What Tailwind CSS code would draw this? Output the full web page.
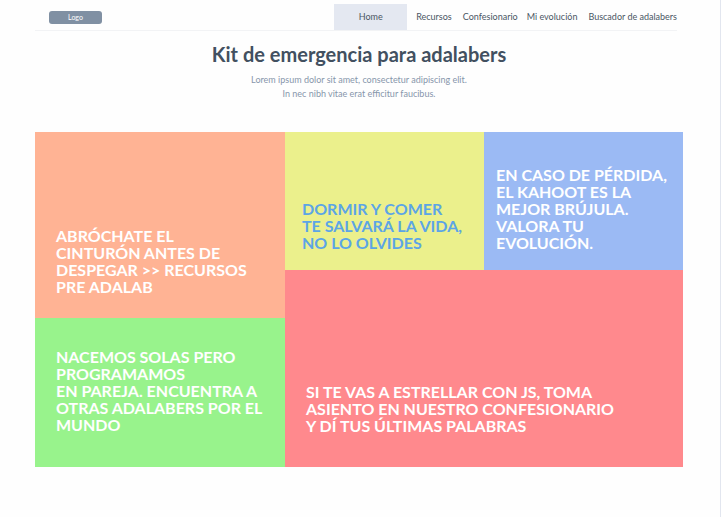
<!DOCTYPE html>
<html lang="es">
<head>
<meta charset="utf-8">
<meta name="viewport" content="width=device-width, initial-scale=1">
<title>Kit de emergencia para adalabers</title>
<script src="https://cdn.jsdelivr.net/npm/@tailwindcss/browser@4"></script>
</head>
<body class="min-h-screen border-r border-[#e2e6ef] bg-[#fefefe] pl-[35px] pr-[37px] font-['Lato','Liberation_Sans',sans-serif]">
  <header class="mr-[6px] flex items-end justify-between border-b border-[#f2f3f5] pt-1 pl-[14px]">
    <a href="#" class="mb-[6px] flex h-[13px] w-[53px] items-center justify-center rounded-[3px] bg-[#8090a3] text-[7px] leading-none text-white">Logo</a>
    <nav class="flex items-center text-[9px] leading-[26px] whitespace-nowrap text-[#4a5664]">
      <a href="#" aria-current="page" class="mr-[9px] w-[73px] bg-[#e4e8f1] text-center">Home</a>
      <a href="#" class="mr-[11px]">Recursos</a>
      <a href="#" class="mr-[9px]">Confesionario</a>
      <a href="#" class="mr-[11px]">Mi evolución</a>
      <a href="#">Buscador de adalabers</a>
    </nav>
  </header>
  <main>
    <section class="pt-[11px] pb-[31px] text-center">
      <h1 class="text-[20px] leading-6 font-bold text-[#425060]">Kit de emergencia para adalabers</h1>
      <p class="mt-[7px] text-[9px] leading-[14px] text-[#8796ab]">Lorem ipsum dolor sit amet, consectetur adipiscing elit.<br>In nec nibh vitae erat efficitur faucibus.</p>
    </section>
    <section class="grid grid-cols-[250fr_398fr] text-[16px] leading-[17px] font-bold text-white">
      <div class="flex flex-col">
        <a href="#" class="flex min-h-[186px] items-end bg-[#ffb394] pr-4 pb-[23px] pl-[21px]"><span>ABRÓCHATE EL<br>CINTURÓN ANTES DE DESPEGAR &gt;&gt; RECURSOS PRE ADALAB</span></a>
        <a href="#" class="flex min-h-[149px] grow items-end bg-[#98f38c] pr-4 pb-[34px] pl-[21px]"><span>NACEMOS SOLAS PERO PROGRAMAMOS<br>EN PAREJA. ENCUENTRA A OTRAS ADALABERS POR EL MUNDO</span></a>
      </div>
      <div class="flex flex-col">
        <div class="grid min-h-[138px] grid-cols-2">
          <a href="#" class="flex items-end bg-[#ebf08c] pr-3 pb-[19px] pl-[17px] text-[#5ca5e6]"><span>DORMIR Y COMER<br>TE SALVARÁ LA VIDA, NO LO OLVIDES</span></a>
          <a href="#" class="flex items-end bg-[#9bbaf4] pr-3 pb-[19px] pl-[12px]"><span>EN CASO DE PÉRDIDA, EL KAHOOT ES LA<br>MEJOR BRÚJULA. VALORA TU EVOLUCIÓN.</span></a>
        </div>
        <a href="#" class="flex min-h-[197px] grow items-end bg-[#ff898d] pr-4 pb-[33px] pl-[21px]"><span>SI TE VAS A ESTRELLAR CON JS, TOMA<br>ASIENTO EN NUESTRO CONFESIONARIO<br>Y DÍ TUS ÚLTIMAS PALABRAS</span></a>
      </div>
    </section>
  </main>
</body>
</html>
